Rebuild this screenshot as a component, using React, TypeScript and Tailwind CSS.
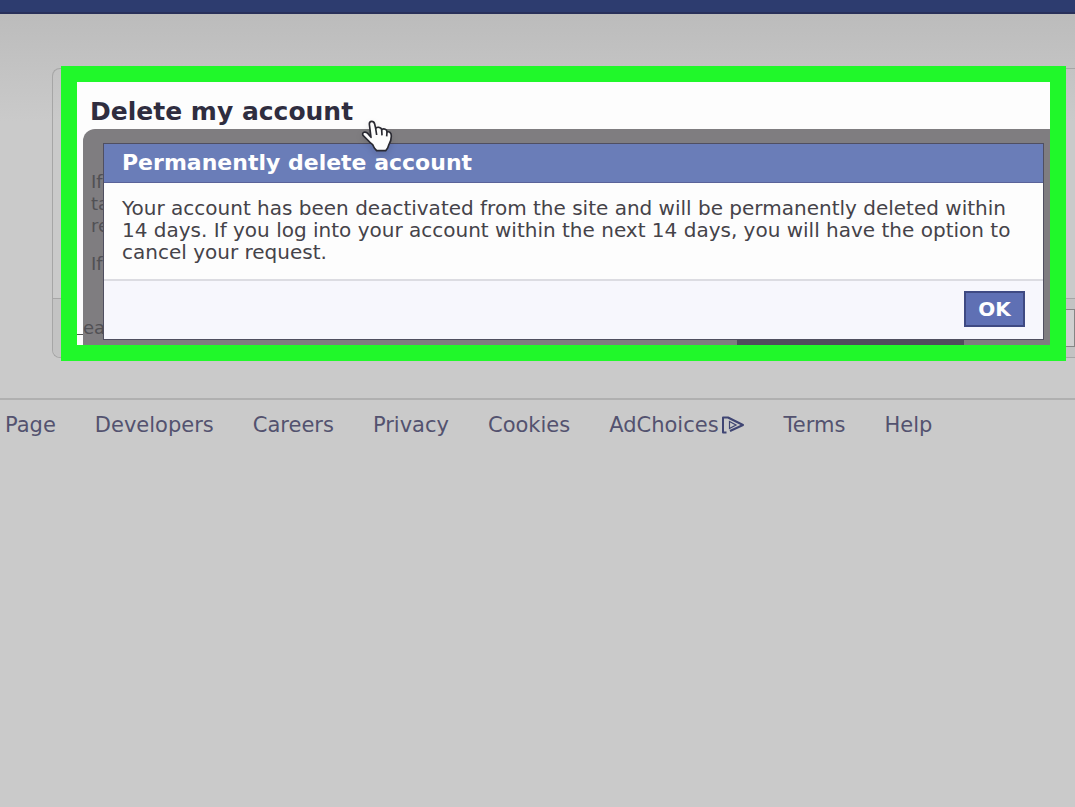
const footerLinks = ["Page", "Developers", "Careers", "Privacy", "Cookies", "AdChoices", "Terms", "Help"];

function AdChoicesIcon() {
  return (
    <svg className="h-[18px] w-6 shrink-0" viewBox="0 0 24 18" fill="none" stroke="#3f4573" aria-hidden="true">
      <path d="M5.5 16.5H2V1.5h5L22 9 9 15" strokeWidth="2" strokeLinejoin="round" />
      <path d="M8.5 5.5v7L15 9z" strokeWidth="1.2" />
    </svg>
  );
}

function HandPointer() {
  return (
    <svg
      className="absolute top-[38px] left-[284px] h-8 w-8 drop-shadow-md"
      viewBox="0 0 96 96"
      fill="#fdfdfd"
      stroke="#292931"
      strokeWidth="5"
      strokeLinejoin="round"
      aria-hidden="true"
    >
      <path d="M30 52 25 12Q25 4 32 4t9 8l3 13q4-4 10-3 7 1 8 7 5-4 11-1 5 2 5 8 5-2 9 1 4 4 4 11 0 14-7 25l-4 11-6 8H47l-7-8-5-10Q27 68 20 60L6 46q-3-7 3-9 6-2 12 4z" />
      <path d="M44 25l3 20M62 29l1 17M78 36l-1 13" />
    </svg>
  );
}

export default function App() {
  return (
    <div className="min-h-screen overflow-hidden bg-[#cacaca] bg-linear-to-b from-[#bababa] to-[#cacaca] to-15% font-['DejaVu_Sans',sans-serif] text-[20px] leading-[22px]">
      <header className="h-[14px] border-b-2 border-[#28305a] bg-[#2d3c6f]" />

      <main className="relative mt-[54px] ml-[52px] rounded-l-lg border border-r-0 border-[#a6a6a6]">
        <div className="absolute inset-x-0 bottom-0 h-[59px] rounded-bl-lg border-t border-[#a6a6a6] bg-[#c3c3c3]">
          <div className="absolute top-[10px] right-0 h-[38px] w-3 border border-[#858585] bg-[#d0d0d0]" />
        </div>

        <section className="relative -mt-[3px] -mb-1 ml-2 mr-[9px] border-[16px] border-[#20f82a] bg-[#fdfdfd]">
          <h1 className="flex h-[47px] items-center pt-3 pl-[13px] text-[25px] font-bold text-[#2f2d3f]">
            Delete my account
          </h1>

          <div className="flex">
            <div className="flex w-[6px] shrink-0 items-end pb-[10px]">
              <span className="h-px w-full bg-[#555]" />
            </div>
            <div className="flex min-w-0 grow rounded-tl-xl bg-[#7f7d80] pr-[6px]">
              {/* page text that the dialog covers */}
              <div className="w-5 shrink-0 pt-[42px] pl-2 text-[18px] text-[#515054]">
                <p>If</p>
                <p>ta</p>
                <p>re</p>
                <p className="mt-4">If</p>
                <p className="-ml-2 mt-[42px]">ea</p>
              </div>

              <div className="relative min-w-0 grow pt-[14px]">
                <div role="dialog" aria-labelledby="dialog-title" className="border border-[#504f60] bg-[#fdfdfd]">
                  <h2
                    id="dialog-title"
                    className="flex h-[39px] items-center border-b border-[#5a6399] bg-[#6a7db8] px-[18px] text-[22px] font-bold text-white"
                  >
                    Permanently delete account
                  </h2>
                  <p className="px-[18px] pt-[14px] pb-4 text-[#454349]">
                    Your account has been deactivated from the site and will be permanently deleted within 14 days. If
                    you log into your account within the next 14 days, you will have the option to cancel your request.
                  </p>
                  <div className="flex justify-end border-t-2 border-[#dcdce2] bg-[#f7f7fd] px-[18px] pt-[10px] pb-3">
                    <button
                      type="button"
                      className="h-9 w-[61px] border-2 border-[#3f4a83] bg-[#5f70b4] font-bold text-white"
                    >
                      OK
                    </button>
                  </div>
                </div>
                <div className="flex h-[5px] justify-end pr-20">
                  <span className="w-[227px] bg-[#504e5c]" />
                </div>
              </div>
            </div>
          </div>
          <HandPointer />
        </section>
      </main>

      <footer className="mt-10 border-t-2 border-[#b0b0b0] pt-[14px]">
        <nav className="flex gap-[39px] pl-[5px] text-[21px] text-[#53526f]">
          {footerLinks.map((link) => (
            <a key={link} href="#" className="flex items-center gap-0.5">
              {link}
              {link === "AdChoices" && <AdChoicesIcon />}
            </a>
          ))}
        </nav>
      </footer>
    </div>
  );
}
